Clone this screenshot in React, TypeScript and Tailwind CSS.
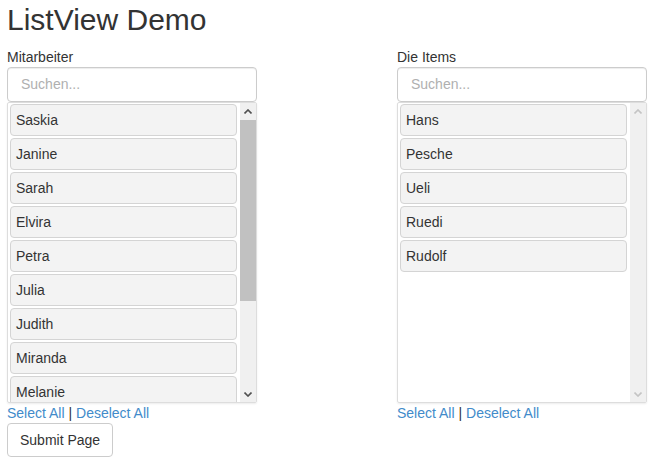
const mitarbeiter = ['Saskia', 'Janine', 'Sarah', 'Elvira', 'Petra', 'Julia', 'Judith', 'Miranda', 'Melanie']
const items = ['Hans', 'Pesche', 'Ueli', 'Ruedi', 'Rudolf']

function Chevron({ up, disabled }: { up?: boolean; disabled?: boolean }) {
  return (
    <svg width="8" height="5" viewBox="0 0 8 5" className="block">
      <path
        d={up ? 'M0.5 4.5 L4 1 L7.5 4.5' : 'M0.5 0.5 L4 4 L7.5 0.5'}
        fill="none"
        stroke={disabled ? '#c4c4c4' : '#505050'}
        strokeWidth="1.6"
      />
    </svg>
  )
}

function Scrollbar({ thumb }: { thumb: boolean }) {
  return (
    <div className="w-[16px] shrink-0 bg-[#f0f0f0] flex flex-col">
      <div className="h-[16px] flex items-center justify-center">
        <Chevron up disabled={!thumb} />
      </div>
      <div className="flex-1">
        {thumb && <div className="h-[181px] mt-[1px] bg-[#c1c1c1]" />}
      </div>
      <div className="h-[16px] flex items-center justify-center">
        <Chevron disabled={!thumb} />
      </div>
    </div>
  )
}

function ListBox({ label, names, thumb }: { label: string; names: string[]; thumb: boolean }) {
  return (
    <div className="w-[250px] flex flex-col">
      <p className="text-[14px] leading-[20px] text-[#333]">{label}</p>
      <div className="h-[35px] border border-[#ccc] rounded-[4px] flex items-center pl-[13px] shadow-[inset_0_1px_1px_rgba(0,0,0,0.075)]">
        <span className="text-[14px] text-[#b0b0b0]">Suchen...</span>
      </div>
      <div className="h-[301px] border border-[#ddd] rounded-[2px] flex shadow-[0_1px_2px_rgba(0,0,0,0.08)]">
        <div className="flex-1 overflow-hidden flex flex-col gap-[2px] pt-[1px] pl-[2px] pr-[3px]">
          {names.map((n) => (
            <div
              key={n}
              className="h-[32px] shrink-0 flex items-center pl-[5px] bg-[#f3f3f3] border border-[#d4d4d4] rounded-[4px] text-[14px] text-[#333]"
            >
              {n}
            </div>
          ))}
        </div>
        <Scrollbar thumb={thumb} />
      </div>
      <p className="text-[14px] leading-[20px] text-[#333]">
        <a className="text-[#428bca]">Select All</a> | <a className="text-[#428bca]">Deselect All</a>
      </p>
    </div>
  )
}

export default function App() {
  return (
    <div className="pl-[7px] font-['Liberation_Sans',Arial,sans-serif] text-[#333]">
      <h1 className="mt-[3px] text-[30px] leading-[33px] font-normal">ListView Demo</h1>
      <div className="mt-[11px] flex gap-[140px]">
        <ListBox label="Mitarbeiter" names={mitarbeiter} thumb />
        <ListBox label="Die Items" names={items} thumb={false} />
      </div>
      <button className="h-[34px] px-[12px] border border-[#ccc] rounded-[4px] bg-white text-[14px] text-[#333]">
        Submit Page
      </button>
    </div>
  )
}
